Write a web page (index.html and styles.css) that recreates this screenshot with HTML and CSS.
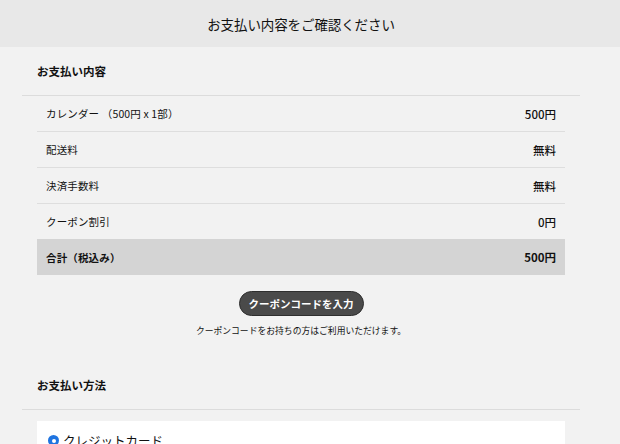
FILE: index.html
```html
<!DOCTYPE html>
<html lang="ja">
<head>
<meta charset="utf-8">
<link rel="stylesheet" href="styles.css">
</head>
<body>
<header class="top">
  <h1 class="top-title">お支払い内容をご確認ください</h1>
</header>
<main class="page">
  <section class="section">
    <h2 class="section-title">お支払い内容</h2>
    <ul class="rows">
      <li class="row"><span class="label">カレンダー （500円 x 1部）</span><span class="value">500円</span></li>
      <li class="row"><span class="label">配送料</span><span class="value">無料</span></li>
      <li class="row"><span class="label">決済手数料</span><span class="value">無料</span></li>
      <li class="row"><span class="label">クーポン割引</span><span class="value">0円</span></li>
      <li class="row total"><span class="label">合計（税込み）</span><span class="value">500円</span></li>
    </ul>
    <div class="coupon">
      <button class="coupon-btn" type="button">クーポンコードを入力</button>
      <p class="coupon-note">クーポンコードをお持ちの方はご利用いただけます。</p>
    </div>
  </section>
  <section class="section">
    <h2 class="section-title">お支払い方法</h2>
    <div class="card">
      <label class="method"><span class="radio"></span>クレジットカード</label>
    </div>
  </section>
</main>
</body>
</html>
```
FILE: styles.css
```css
* { box-sizing: border-box; }
html, body { margin: 0; padding: 0; }
body {
  background: #f2f2f2;
  color: #111;
  font-family: "Noto Sans CJK JP", "Noto Sans", sans-serif;
  overflow: hidden;
}
.top {
  height: 47px;
  background: #e8e8e8;
  display: flex;
  align-items: center;
  justify-content: center;
  padding-right: 18px;
}
.top-title {
  margin: 0;
  font-size: 13.5px;
  font-weight: 400;
  letter-spacing: -0.1px;
}
.page {
  width: 558px;
  margin-left: 22px;
}
.section-title {
  margin: 0;
  height: 49px;
  display: flex;
  align-items: center;
  padding-left: 15px;
  font-size: 11.5px;
  font-weight: 700;
  border-bottom: 1px solid #dcdcdc;
}
.rows {
  list-style: none;
  margin: 0 15px;
  padding: 0;
}
.row {
  height: 36px;
  display: flex;
  align-items: center;
  justify-content: space-between;
  padding: 0 9px;
  border-bottom: 1px solid #dedede;
  font-size: 10.5px;
}
.row .label { letter-spacing: 0.15px; }
.row:nth-child(4) { border-bottom: none; height: 35px; }
.row .value { font-weight: 500; font-size: 11.5px; }
.row.total {
  background: #d4d4d4;
  border-bottom: none;
  font-weight: 700;
  height: 36px;
}
.row.total .value { font-weight: 700; }
.coupon {
  display: flex;
  flex-direction: column;
  align-items: center;
  padding-top: 16px;
  padding-bottom: 24px;
}
.coupon-btn {
  height: 25px;
  padding: 0 9px;
  border-radius: 13px;
  border: 1px solid #2e2e2e;
  background: #4a4a4a;
  color: #fff;
  font-family: inherit;
  font-size: 10.5px;
  font-weight: 700;
}
.coupon-note {
  margin: 9px 0 0;
  font-size: 8.8px;
  line-height: 12px;
}
.card {
  margin: 11px 15px 0;
  background: #fff;
  padding: 10px 11px;
}
.method {
  display: flex;
  align-items: center;
  gap: 4px;
  font-size: 12.5px;
}
.radio {
  width: 11px;
  height: 11px;
  border-radius: 50%;
  background: #1f74e0;
  display: flex;
  align-items: center;
  justify-content: center;
}
.radio::after {
  content: "";
  width: 4px;
  height: 4px;
  border-radius: 50%;
  background: #fff;
}
```
